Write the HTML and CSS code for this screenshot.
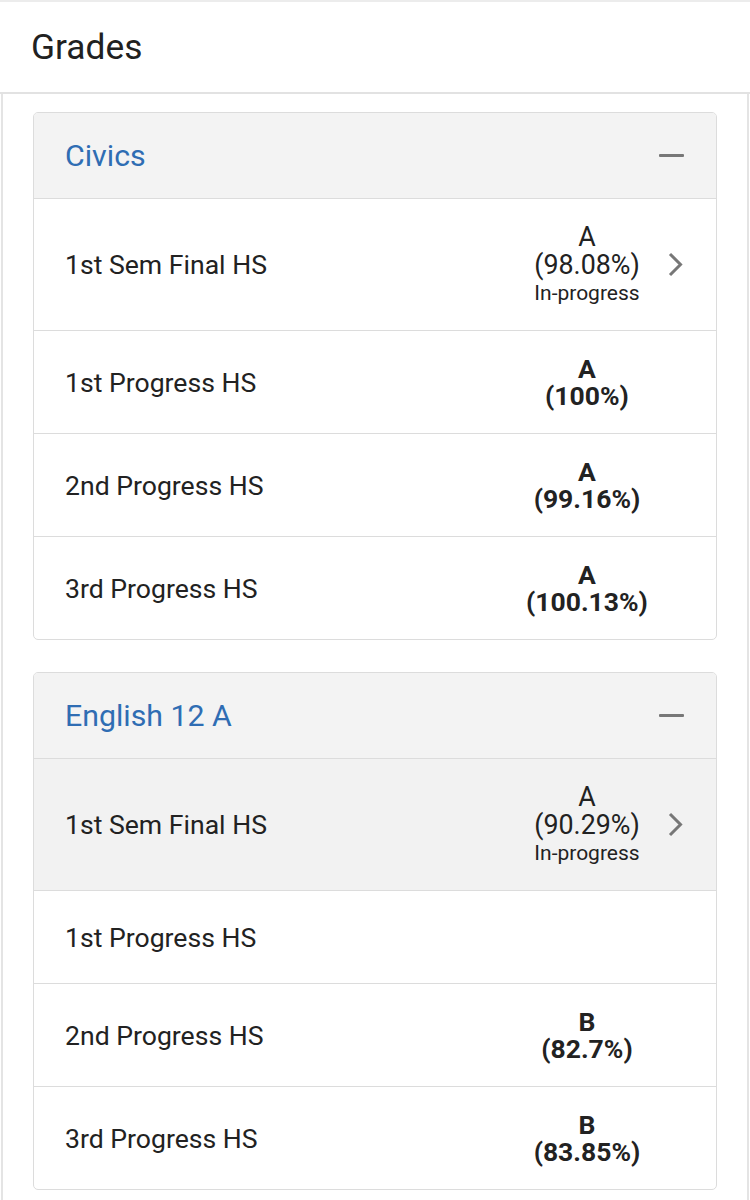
FILE: index.html
```html
<!DOCTYPE html>
<html>
<head>
<meta charset="utf-8">
<link rel="stylesheet" href="styles.css">
</head>
<body>
<div class="topbar">
  <h1 class="title">Grades</h1>
</div>
<div class="panel">
  <div class="card">
    <div class="card-head">
      <span class="course">Civics</span>
      <span class="minus"></span>
    </div>
    <div class="row">
      <span class="label">1st Sem Final HS</span>
      <div class="grade">
        <div class="g-line">A</div>
        <div class="g-line">(98.08%)</div>
        <div class="g-status">In-progress</div>
      </div>
      <div class="chev-slot">
        <svg class="chev" viewBox="0 0 15 25" width="15" height="25"><polyline points="2,2 12.5,12.5 2,23" fill="none" stroke="#777" stroke-width="3"/></svg>
      </div>
    </div>
    <div class="row">
      <span class="label">1st Progress HS</span>
      <div class="grade bold">
        <div class="g-line">A</div>
        <div class="g-line">(100%)</div>
      </div>
      <div class="chev-slot"></div>
    </div>
    <div class="row">
      <span class="label">2nd Progress HS</span>
      <div class="grade bold">
        <div class="g-line">A</div>
        <div class="g-line">(99.16%)</div>
      </div>
      <div class="chev-slot"></div>
    </div>
    <div class="row">
      <span class="label">3rd Progress HS</span>
      <div class="grade bold">
        <div class="g-line">A</div>
        <div class="g-line">(100.13%)</div>
      </div>
      <div class="chev-slot"></div>
    </div>
  </div>

  <div class="card">
    <div class="card-head">
      <span class="course">English 12 A</span>
      <span class="minus"></span>
    </div>
    <div class="row active">
      <span class="label">1st Sem Final HS</span>
      <div class="grade">
        <div class="g-line">A</div>
        <div class="g-line">(90.29%)</div>
        <div class="g-status">In-progress</div>
      </div>
      <div class="chev-slot">
        <svg class="chev" viewBox="0 0 15 25" width="15" height="25"><polyline points="2,2 12.5,12.5 2,23" fill="none" stroke="#777" stroke-width="3"/></svg>
      </div>
    </div>
    <div class="row">
      <span class="label">1st Progress HS</span>
      <div class="grade bold"></div>
      <div class="chev-slot"></div>
    </div>
    <div class="row">
      <span class="label">2nd Progress HS</span>
      <div class="grade bold">
        <div class="g-line">B</div>
        <div class="g-line">(82.7%)</div>
      </div>
      <div class="chev-slot"></div>
    </div>
    <div class="row">
      <span class="label">3rd Progress HS</span>
      <div class="grade bold">
        <div class="g-line">B</div>
        <div class="g-line">(83.85%)</div>
      </div>
      <div class="chev-slot"></div>
    </div>
  </div>
</div>
</body>
</html>
```

FILE: styles.css
```css
html, body {
  margin: 0;
  padding: 0;
  background: #ffffff;
}
body {
  font-family: Roboto, "Liberation Sans", Arial, sans-serif;
  color: #222222;
}
.topbar {
  height: 94px;
  box-sizing: border-box;
  border-top: 2px solid #ececec;
  border-bottom: 2px solid #e2e2e2;
  display: flex;
  align-items: center;
  padding-left: 31px;
}
.title {
  margin: 0;
  font-size: 35.3px;
  font-weight: 400;
  color: #212121;
}
.panel {
  margin: 0 1px;
  border-left: 2px solid #e4e4e4;
  border-right: 2px solid #e4e4e4;
  padding: 18px 30px 12px;
  display: flex;
  flex-direction: column;
  gap: 32px;
}
.card {
  border: 1px solid #dcdcdc;
  border-radius: 5px;
  overflow: hidden;
}
.card-head {
  height: 85px;
  background: #f3f3f3;
  border-bottom: 1px solid #dcdcdc;
  display: flex;
  align-items: center;
  justify-content: space-between;
  padding: 0 32px 0 31px;
}
.course {
  font-size: 30.3px;
  color: #2f6db3;
}
.minus {
  width: 25px;
  height: 3px;
  background: #777777;
  border-radius: 1px;
}
.row {
  display: flex;
  align-items: center;
  padding: 23.5px 0 23.5px 31px;
  border-bottom: 1px solid #dcdcdc;
  min-height: 45px;
}
.row:last-child {
  border-bottom: none;
}
.row.active {
  background: #f2f2f2;
}
.label {
  flex: 1;
  font-size: 26.6px;
  line-height: 45px;
}
.grade {
  width: 134px;
  text-align: center;
}
.g-line {
  font-size: 26.8px;
  line-height: 28px;
}
.g-status {
  font-size: 21px;
  line-height: 28px;
}
.grade.bold .g-line {
  font-weight: 700;
  font-size: 26.5px;
  line-height: 27.5px;
}
.chev-slot {
  width: 62px;
  display: flex;
  align-items: center;
}
.chev {
  display: block;
  margin-left: 14px;
}
```
